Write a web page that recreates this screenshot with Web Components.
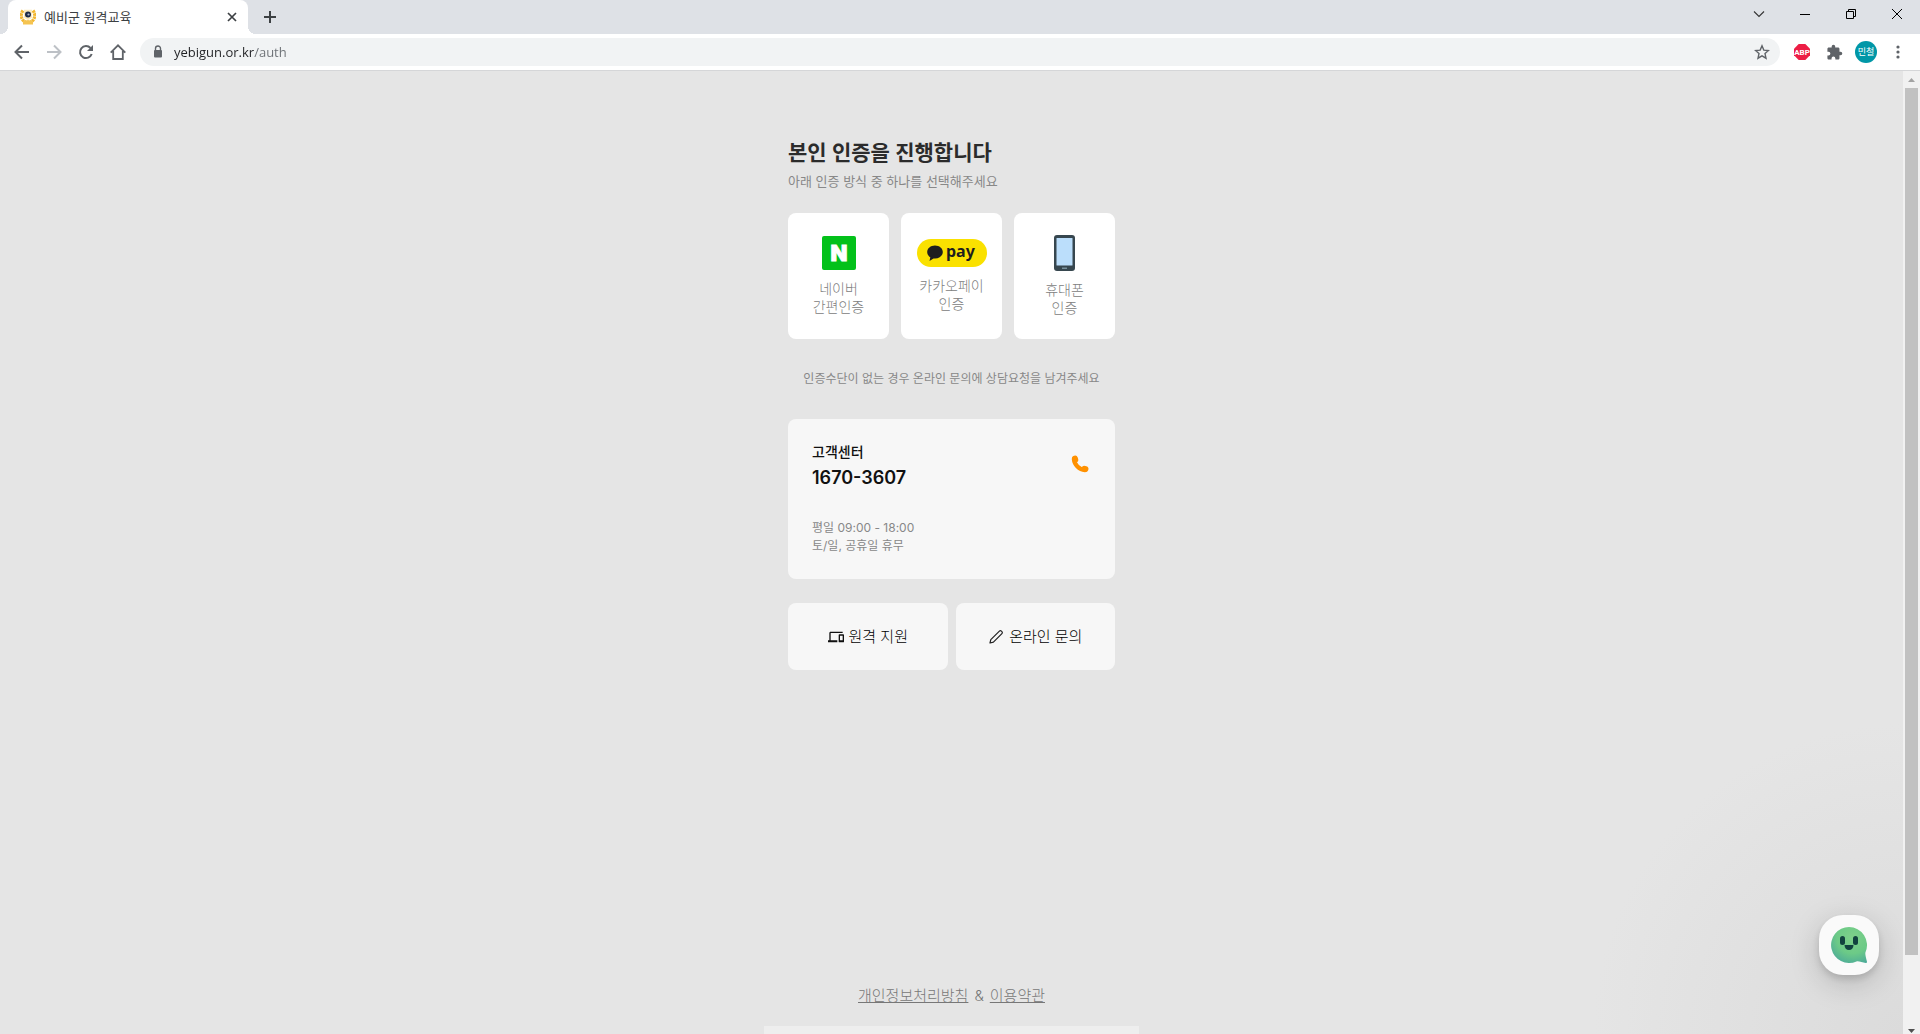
<!DOCTYPE html>
<html lang="ko">
<head>
<meta charset="utf-8">
<title>예비군 원격교육</title>
<style>
    html, body {
        height: 100%;
    }
    body {
        margin: 0;
        font-family: Inter, "Noto Sans CJK KR", sans-serif;
        color: #222;
    }
</style>
</head>
<body>

<browser-window>
    <tab-strip slot="tabs">예비군 원격교육</tab-strip>
    <browser-toolbar slot="toolbar" url="yebigun.or.kr/auth"></browser-toolbar>

    <auth-page>
        <page-heading>
            본인 인증을 진행합니다
            <span slot="sub">아래 인증 방식 중 하나를 선택해주세요</span>
        </page-heading>

        <auth-methods>
            <auth-method>
                <svg slot="icon" width="34" height="34" viewBox="0 0 34 34" aria-hidden="true">
                    <rect width="34" height="34" rx="2" fill="#03c11a"/>
                    <text x="17" y="25" text-anchor="middle" font-family="Inter" font-size="22" font-weight="900" fill="#fff" stroke="#fff" stroke-width=".8">N</text>
                </svg>
                네이버<br>간편인증
            </auth-method>
            <auth-method>
                <svg slot="icon" width="70" height="28" viewBox="0 0 70 28" aria-hidden="true">
                    <rect width="70" height="28" rx="14" fill="#fae100"/>
                    <path d="M18 6.500c4.400 0 7.800 2.900 7.800 6.500s-3.400 6.500-7.800 6.500c-.5 0-1 0-1.500-.1L12.500 22l.8-3.700c-1.900-1.200-3.100-3.100-3.100-5.300 0-3.600 3.400-6.500 7.800-6.500z" fill="#1e1e1e"/>
                    <text x="29" y="18" font-family="Noto Sans" font-size="16" font-weight="700" fill="#1e1e1e">pay</text>
                </svg>
                카카오페이<br>인증
            </auth-method>
            <auth-method>
                <svg slot="icon" width="21" height="36" viewBox="0 0 21 36" aria-hidden="true">
                    <rect width="21" height="36" rx="3" fill="#37474f"/>
                    <rect x="2.500" y="3" width="16" height="27.500" rx=".5" fill="#bbdefb"/>
                    <rect x="8" y="32.500" width="5" height="1.500" fill="#78909c"/>
                </svg>
                휴대폰<br>인증
            </auth-method>
        </auth-methods>

        <page-notice>인증수단이 없는 경우 온라인 문의에 상담요청을 남겨주세요</page-notice>

        <support-card phone="1670-3607">
            고객센터
            <span slot="hours">평일 09:00 - 18:00<br>토/일, 공휴일 휴무</span>
        </support-card>

        <action-row>
            <action-button>
                <svg slot="icon" width="16" height="16" viewBox="0 0 24 24" fill="#111" aria-hidden="true"><path d="M4 6h18V4H4c-1.100 0-2 .9-2 2v11H0v3h14v-3H4V6zm19 2h-6c-.55 0-1 .45-1 1v10c0 .55.45 1 1 1h6c.55 0 1-.45 1-1V9c0-.55-.45-1-1-1zm-1 9h-4v-7h4v7z"/></svg>
                원격 지원
            </action-button>
            <action-button>
                <svg slot="icon" width="16" height="16" viewBox="0 0 16 16" fill="none" stroke="#222" stroke-width="1.200" stroke-linejoin="round" aria-hidden="true"><path d="M2 14l.8-3.400 8.600-8.500c.6-.6 1.400-.6 2 0l.5.5c.6.6.6 1.400 0 2l-8.500 8.600L2 14z"/></svg>
                온라인 문의
            </action-button>
        </action-row>

        <page-footer slot="footer">
            <a href="#privacy">개인정보처리방침</a>
            <span>&amp;</span>
            <a href="#terms">이용약관</a>
        </page-footer>
    </auth-page>

    <chat-launcher slot="overlay"></chat-launcher>
</browser-window>

<script>
/**
 * Base class: clones the static html of the subclass into an open shadow root
 */
class BaseElement extends HTMLElement {
    constructor() {
        super();
        const template = document.createElement('template');
        template.innerHTML = `<style>* { box-sizing: border-box; } svg { display: block; }</style>` + this.constructor.html;
        this.attachShadow({ mode: 'open' }).append(template.content.cloneNode(true));
    }
}

// Browser frame: tabs, toolbar, viewport and scrollbar
class BrowserWindow extends BaseElement {
    static html = `
        <style>
            :host {
                display: flex;
                flex-direction: column;
                height: 100vh;
            }
            .view {
                position: relative;
                flex: 1;
                min-height: 0;
                display: flex;
                overflow: hidden;
                border-top: 1px solid #d5d6d8;
                background: #e5e5e5;
            }
            .page {
                position: relative;
                flex: 1;
                display: flex;
                overflow: hidden;
                background: radial-gradient(circle 310px at 100% 100%, #dbdbdb, #e5e5e5);
            }
            ::slotted(auth-page) {
                flex: 1;
            }
            .scrollbar {
                width: 17px;
                display: flex;
                flex-direction: column;
                align-items: center;
                background: #f1f1f1;
            }
            .scrollbar svg {
                flex: none;
            }
            .track {
                flex: 1;
                width: 13px;
            }
            .thumb {
                height: 93%;
                background: #c1c1c1;
            }
        </style>
        <slot name="tabs"></slot>
        <slot name="toolbar"></slot>
        <div class="view">
            <div class="page">
                <slot></slot>
                <slot name="overlay"></slot>
            </div>
            <div class="scrollbar">
                <svg width="17" height="17" viewBox="0 0 17 17"><path d="M5 11h7L8.500 7z" fill="#a3a3a3"/></svg>
                <div class="track"><div class="thumb"></div></div>
                <svg width="17" height="14" viewBox="0 0 17 14"><path d="M5 9h7l-3.500 4z" fill="#505050"/></svg>
            </div>
        </div>`;
}

class TabStrip extends BaseElement {
    static html = `
        <style>
            :host {
                display: flex;
                height: 34px;
                padding-left: 8px;
                background: #dee1e6;
                color: #3c4043;
                font: 13px/18px Inter, "Noto Sans CJK KR", sans-serif;
            }
            .tab {
                position: relative;
                display: flex;
                align-items: center;
                width: 240px;
                padding: 0 8px 0 12px;
                gap: 8px;
                border-radius: 8px 8px 0 0;
                background: #fff;
            }
            /* curved feet of the active tab */
            .tab::before, .tab::after {
                content: "";
                position: absolute;
                bottom: 0;
                width: 8px;
                height: 8px;
            }
            .tab::before {
                right: 100%;
                background: radial-gradient(circle at 0 0, #dee1e6 8px, #fff 8px);
            }
            .tab::after {
                left: 100%;
                background: radial-gradient(circle at 100% 0, #dee1e6 8px, #fff 8px);
            }
            .title {
                flex: 1;
                white-space: nowrap;
            }
            button {
                display: grid;
                place-items: center;
                padding: 0;
                border: 0;
                background: none;
            }
            .close {
                width: 16px;
                height: 16px;
            }
            .new {
                width: 28px;
                margin-left: 8px;
            }
            .caption {
                display: flex;
                margin-left: auto;
                height: 28px;
            }
            .caption button {
                width: 46px;
            }
        </style>
        <div class="tab">
            <svg width="16" height="16" viewBox="0 0 16 16">
                <path d="M3 1.500C0 5.500 1 11 5.500 13M13 1.500c3 4 2 9.500-2.500 11.500" fill="none" stroke="#f2b731" stroke-width="3.200" stroke-dasharray="2.600 .5"/>
                <path d="M3 12l5-1 5 1v3.500H3z" fill="#f5c451"/>
                <path d="M4 .8h8v8l-4 2.400-4-2.400z" fill="#fbe9bd"/>
                <circle cx="8" cy="5.500" r="3" fill="#1c2a4a"/>
                <circle cx="8.500" cy="5.500" r="1.100" fill="#a9b2c6"/>
            </svg>
            <span class="title"><slot></slot></span>
            <button class="close" aria-label="탭 닫기"><svg width="10" height="10" viewBox="0 0 10 10" stroke="#3c4043" stroke-width="1.700"><path d="M1 1l8 8M9 1L1 9"/></svg></button>
        </div>
        <button class="new" aria-label="새 탭"><svg width="12" height="12" viewBox="0 0 12 12" stroke="#3c4043" stroke-width="2"><path d="M6 0v12M0 6h12"/></svg></button>
        <div class="caption">
            <button aria-label="탭 검색"><svg width="12" height="12" viewBox="0 0 12 12" fill="none" stroke="#333" stroke-width="1.100"><path d="M1 3.500l5 5 5-5"/></svg></button>
            <button aria-label="최소화"><svg width="10" height="10" viewBox="0 0 10 10"><path d="M0 5h10v1H0z"/></svg></button>
            <button aria-label="이전 크기로"><svg width="10" height="10" viewBox="0 0 10 10" fill="none" stroke="#000"><path d="M.5 2.500h7v7h-7zM2.500 2.500v-2h7v7h-2"/></svg></button>
            <button aria-label="닫기"><svg width="10" height="10" viewBox="0 0 10 10" stroke="#000"><path d="M0 0l10 10M10 0L0 10"/></svg></button>
        </div>`;
}

class BrowserToolbar extends BaseElement {
    static html = `
        <style>
            :host {
                display: flex;
                align-items: center;
                height: 36px;
                padding: 0 6px;
                background: #fff;
            }
            button {
                display: grid;
                place-items: center;
                flex: none;
                width: 32px;
                height: 32px;
                padding: 0;
                border: 0;
                background: none;
            }
            .omnibox {
                flex: 1;
                display: flex;
                align-items: center;
                height: 28px;
                margin: 0 6px;
                padding: 0 2px 0 10px;
                border-radius: 14px;
                background: #f1f3f4;
            }
            input {
                flex: 1;
                min-width: 0;
                height: 20px;
                margin-left: 8px;
                padding: 0;
                border: 0;
                outline: 0;
                font: 13px/20px "Open Sans", sans-serif;
                color: #202124;
                /* host is dark, path is grey */
                background: linear-gradient(to right, #202124 80px, #6b6f74 80px);
                -webkit-background-clip: text;
                background-clip: text;
                -webkit-text-fill-color: transparent;
            }
            .avatar {
                display: grid;
                place-items: center;
                width: 22px;
                height: 22px;
                border-radius: 50%;
                background: #0097a7;
                color: #fff;
                font: 9px/12px "Noto Sans CJK KR", sans-serif;
            }
        </style>
        <button aria-label="뒤로"><svg width="16" height="16" viewBox="0 0 16 16" fill="none" stroke="#5f6368" stroke-width="2"><path d="M15 8H2M8 1.500L1.500 8 8 14.500"/></svg></button>
        <button aria-label="앞으로"><svg width="16" height="16" viewBox="0 0 16 16" fill="none" stroke="#bdc1c6" stroke-width="2"><path d="M1 8h13M8 1.500L14.500 8 8 14.500"/></svg></button>
        <button aria-label="새로고침"><svg width="16" height="16" viewBox="0 0 16 16" fill="none" stroke="#5f6368" stroke-width="2"><path d="M13.700 10A6 6 0 1 1 12.500 4"/><path d="M15 1v6H9z" fill="#5f6368" stroke="none"/></svg></button>
        <button aria-label="홈"><svg width="16" height="16" viewBox="0 0 16 16" fill="none" stroke="#5f6368" stroke-width="1.800"><path d="M.7 8.600L8 1.300l7.300 7.300M3.200 7v8h9.600V7"/></svg></button>
        <div class="omnibox">
            <svg width="16" height="16" viewBox="0 0 16 16"><path d="M5.500 7V4.500a2.500 2.500 0 0 1 5 0V7" fill="none" stroke="#5f6368" stroke-width="1.400"/><rect x="4" y="6" width="8" height="7.500" rx="1" fill="#5f6368"/></svg>
            <input type="text" aria-label="주소창">
            <button aria-label="북마크"><svg width="16" height="16" viewBox="0 0 16 16" fill="none" stroke="#5f6368" stroke-width="1.400"><path d="M8 1.800l1.800 4.300 4.700.4-3.500 3.100 1 4.600L8 11.800l-4 2.400 1-4.600-3.500-3.100 4.700-.4z"/></svg></button>
        </div>
        <button aria-label="Adblock Plus"><svg width="16" height="16" viewBox="0 0 16 16"><path d="M4.700 0h6.600L16 4.700v6.600L11.300 16H4.700L0 11.300V4.700z" fill="#ed1e45"/><text x="8" y="11" text-anchor="middle" font-family="Roboto" font-size="8" font-weight="700" fill="#fff">ABP</text></svg></button>
        <button aria-label="확장 프로그램"><svg width="17" height="17" viewBox="0 0 24 24" fill="#5f6368"><path d="M20.500 11H19V7c0-1.100-.9-2-2-2h-4V3.500a2.500 2.500 0 0 0-5 0V5H4c-1.100 0-2 .9-2 2v3.800h1.500a2.700 2.700 0 0 1 0 5.400H2V20c0 1.100.9 2 2 2h3.800v-1.500a2.700 2.700 0 0 1 5.400 0V22H17c1.100 0 2-.9 2-2v-4h1.500a2.500 2.500 0 0 0 0-5z"/></svg></button>
        <button aria-label="프로필"><span class="avatar">민철</span></button>
        <button aria-label="메뉴"><svg width="16" height="16" viewBox="0 0 16 16" fill="#5f6368"><circle cx="8" cy="3" r="1.600"/><circle cx="8" cy="8" r="1.600"/><circle cx="8" cy="13" r="1.600"/></svg></button>`;

    connectedCallback() {
        this.shadowRoot.querySelector('input').value = this.getAttribute('url');
    }
}

class AuthPage extends BaseElement {
    static html = `
        <style>
            :host {
                display: flex;
                flex-direction: column;
                align-items: center;
            }
            main {
                width: 100%;
                max-width: 375px;
                padding: 68px 24px 0;
            }
            footer {
                margin-top: auto;
                width: 100%;
                max-width: 375px;
            }
            .notice-box {
                height: 8px;
                margin-top: 20px;
                background: #eee;
            }
        </style>
        <main><slot></slot></main>
        <footer>
            <slot name="footer"></slot>
            <div class="notice-box"></div>
        </footer>`;
}

class PageHeading extends BaseElement {
    static html = `
        <style>
            :host {
                display: block;
            }
            h1 {
                margin: 0;
                font-size: 21px;
                line-height: 28px;
                font-weight: 600;
                color: #2b2b2b;
            }
            p {
                margin: 5px 0 23px;
                font-size: 13px;
                line-height: 18px;
                color: #888;
            }
        </style>
        <h1><slot></slot></h1>
        <p><slot name="sub"></slot></p>`;
}

class AuthMethods extends BaseElement {
    static html = `
        <style>
            :host {
                display: grid;
                grid-template-columns: repeat(3, 1fr);
                gap: 12px;
            }
        </style>
        <slot></slot>`;
}

class AuthMethod extends BaseElement {
    static html = `
        <style>
            :host {
                display: block;
            }
            button {
                display: flex;
                flex-direction: column;
                align-items: center;
                justify-content: center;
                gap: 10px;
                width: 100%;
                height: 126px;
                padding: 0;
                border: 0;
                border-radius: 8px;
                background: #fff;
                color: #808080;
                font: 300 14px/18px Inter, "Noto Sans CJK KR", sans-serif;
            }
        </style>
        <button>
            <slot name="icon"></slot>
            <span><slot></slot></span>
        </button>`;
}

class PageNotice extends BaseElement {
    static html = `
        <style>
            :host {
                display: block;
                margin: 31px 0;
                font-size: 12px;
                line-height: 18px;
                text-align: center;
                white-space: nowrap;
                color: #888;
            }
        </style>
        <slot></slot>`;
}

class SupportCard extends BaseElement {
    static html = `
        <style>
            :host {
                display: block;
                padding: 24px;
                border-radius: 8px;
                background: #f7f7f7;
            }
            .head {
                display: flex;
                justify-content: space-between;
            }
            .name {
                font-size: 14px;
                line-height: 18px;
                font-weight: 500;
                color: #111;
            }
            .phone {
                margin-top: 4px;
                font-size: 18px;
                line-height: 26px;
                font-weight: 600;
                color: #111;
            }
            .call {
                display: grid;
                place-items: center;
                height: 42px;
            }
            .hours {
                margin-top: 28px;
                font-size: 12px;
                line-height: 18px;
                color: #888;
            }
        </style>
        <div class="head">
            <div>
                <div class="name"><slot></slot></div>
                <div class="phone"></div>
            </div>
            <a class="call" aria-label="전화 걸기">
                <svg width="22" height="22" viewBox="0 0 24 24" fill="none" stroke="#ff9100" stroke-linecap="round"><path d="M5.300 6.500C5.800 13 11 18.200 17.500 18.700" stroke-width="4.600"/><path d="M6.500 6l.4 1.200M16.800 17.100l1.200.4" stroke-width="6.400"/></svg>
            </a>
        </div>
        <div class="hours"><slot name="hours"></slot></div>`;

    connectedCallback() {
        const phone = this.getAttribute('phone');
        this.shadowRoot.querySelector('.phone').textContent = phone;
        this.shadowRoot.querySelector('.call').href = 'tel:' + phone;
    }
}

class ActionRow extends BaseElement {
    static html = `
        <style>
            :host {
                display: grid;
                grid-template-columns: 1fr 1fr;
                gap: 8px;
                margin-top: 24px;
            }
        </style>
        <slot></slot>`;
}

class ActionButton extends BaseElement {
    static html = `
        <style>
            :host {
                display: block;
            }
            button {
                display: flex;
                align-items: center;
                justify-content: center;
                gap: 5px;
                width: 100%;
                padding: 24px 0;
                border: 0;
                border-radius: 8px;
                background: #f7f7f7;
                color: #000;
                font: 300 15px/19px Inter, "Noto Sans CJK KR", sans-serif;
            }
        </style>
        <button>
            <slot name="icon"></slot>
            <span><slot></slot></span>
        </button>`;
}

class PageFooter extends BaseElement {
    static html = `
        <style>
            :host {
                display: flex;
                justify-content: center;
                gap: 6px;
                font-size: 15px;
                line-height: 20px;
                font-weight: 300;
                color: #777;
            }
            ::slotted(a) {
                color: inherit;
                text-decoration: underline;
            }
        </style>
        <slot></slot>`;
}

// Floating chat button in the corner of the viewport
class ChatLauncher extends BaseElement {
    static html = `
        <style>
            :host {
                position: absolute;
                right: 24px;
                bottom: 59px;
            }
            button {
                display: grid;
                place-items: center;
                width: 60px;
                height: 60px;
                padding: 0;
                border: 0;
                border-radius: 24px;
                background: #fafafa;
                box-shadow: 0 4px 6px rgba(0, 0, 0, .12), 0 8px 30px rgba(0, 0, 0, .18);
            }
        </style>
        <button aria-label="채팅 상담">
            <svg width="36" height="36" viewBox="0 0 36 36">
                <defs>
                    <radialGradient id="face" cx=".6" cy=".3" r=".8">
                        <stop offset="0" stop-color="#7fd08a"/>
                        <stop offset=".55" stop-color="#6cca87"/>
                        <stop offset="1" stop-color="#4aa89a"/>
                    </radialGradient>
                </defs>
                <path d="M18 0a18 18 0 0 1 16.500 25.200c-.6 1.600.4 5.300 1.500 9.500.2.900-.3 1.300-1.200 1.200-3.600-.4-6.600-1.900-9.300-1.500A18 18 0 1 1 18 0z" fill="url(#face)"/>
                <rect x="9" y="9" width="5" height="9" rx="2.500" fill="#12433f"/>
                <rect x="22" y="9" width="5" height="9" rx="2.500" fill="#12433f"/>
                <path d="M13.500 18h9c0 3-1.900 5-4.500 5s-4.500-2-4.500-5z" fill="#12433f"/>
            </svg>
        </button>`;
}

// Register custom elements
customElements.define('browser-window', BrowserWindow);
customElements.define('tab-strip', TabStrip);
customElements.define('browser-toolbar', BrowserToolbar);
customElements.define('auth-page', AuthPage);
customElements.define('page-heading', PageHeading);
customElements.define('auth-methods', AuthMethods);
customElements.define('auth-method', AuthMethod);
customElements.define('page-notice', PageNotice);
customElements.define('support-card', SupportCard);
customElements.define('action-row', ActionRow);
customElements.define('action-button', ActionButton);
customElements.define('page-footer', PageFooter);
customElements.define('chat-launcher', ChatLauncher);
</script>
</body>
</html>
